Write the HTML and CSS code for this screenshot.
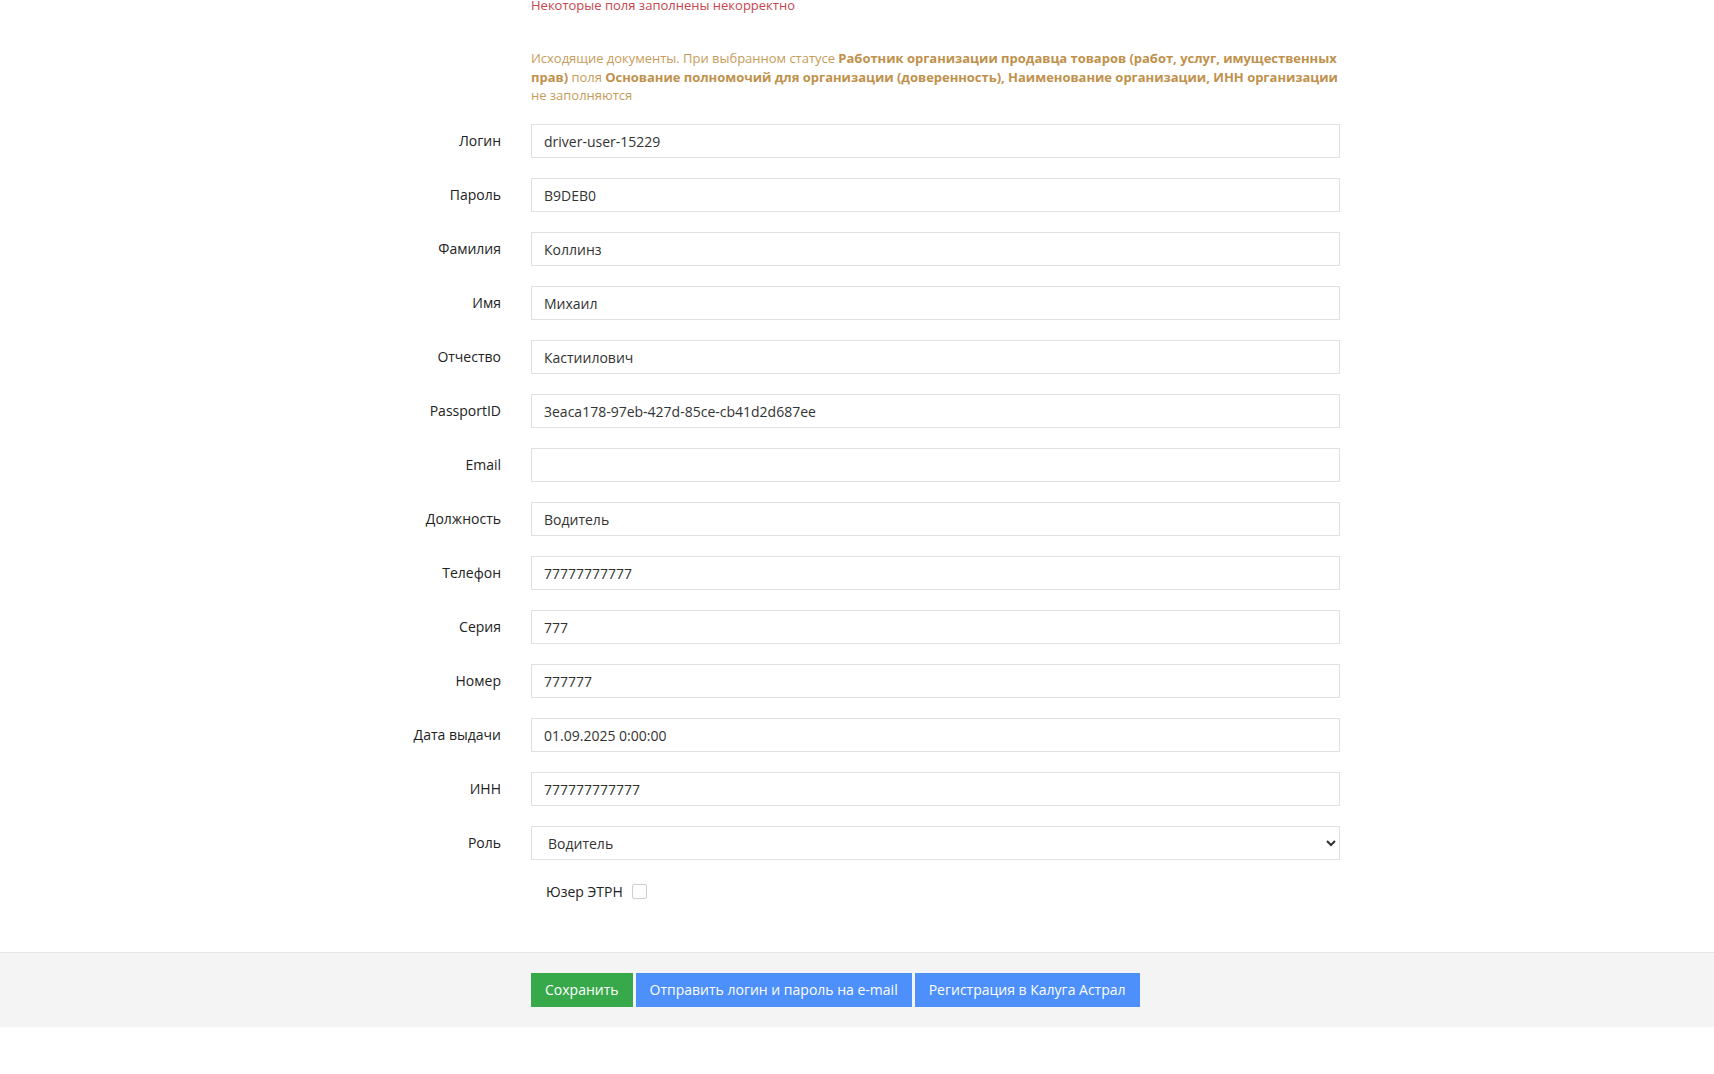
FILE: index.html
```html
<!DOCTYPE html>
<html lang="ru">
<head>
  <meta charset="UTF-8">
  <title>Пользователь</title>
  <link rel="stylesheet" href="styles.css">
</head>
<body>
  <div class="form-body">
    <div class="form-row">
      <div></div>
      <div class="msg-error">Некоторые поля заполнены некорректно</div>
    </div>

    <div class="form-row">
      <div></div>
      <div class="msg-info">
        Исходящие документы. При выбранном статусе <strong>Работник организации продавца товаров (работ, услуг, имущественных<br>прав)</strong> поля <strong>Основание полномочий для организации (доверенность), Наименование организации, ИНН организации</strong> не заполняются
      </div>
    </div>

    <div class="fields">
      <label for="login">Логин</label>
      <input type="text" id="login" value="driver-user-15229">

      <label for="password">Пароль</label>
      <input type="text" id="password" value="B9DEB0">

      <label for="lastName">Фамилия</label>
      <input type="text" id="lastName" value="Коллинз">

      <label for="firstName">Имя</label>
      <input type="text" id="firstName" value="Михаил">

      <label for="middleName">Отчество</label>
      <input type="text" id="middleName" value="Кастиилович">

      <label for="passportId">PassportID</label>
      <input type="text" id="passportId" value="3eaca178-97eb-427d-85ce-cb41d2d687ee">

      <label for="email">Email</label>
      <input type="text" id="email" value="">

      <label for="position">Должность</label>
      <input type="text" id="position" value="Водитель">

      <label for="phone">Телефон</label>
      <input type="text" id="phone" value="77777777777">

      <label for="series">Серия</label>
      <input type="text" id="series" value="777">

      <label for="number">Номер</label>
      <input type="text" id="number" value="777777">

      <label for="issueDate">Дата выдачи</label>
      <input type="text" id="issueDate" value="01.09.2025 0:00:00">

      <label for="inn">ИНН</label>
      <input type="text" id="inn" value="777777777777">

      <label for="role">Роль</label>
      <select id="role">
        <option>Водитель</option>
        <option>Диспетчер</option>
        <option>Администратор</option>
      </select>
    </div>

    <div class="form-row check-row">
      <div></div>
      <label class="check"><span>Юзер ЭТРН</span><input type="checkbox" id="etrn"></label>
    </div>
  </div>

  <div class="form-footer">
    <div class="form-row">
      <div></div>
      <div class="buttons">
        <button class="btn btn-green">Сохранить</button>
        <button class="btn btn-blue">Отправить логин и пароль на e-mail</button>
        <button class="btn btn-blue">Регистрация в Калуга Астрал</button>
      </div>
    </div>
  </div>
</body>
</html>
```

FILE: styles.css
```css
body { margin: 0; font-family: "Open Sans", "Noto Sans", sans-serif; font-size: 14px; line-height: 20px; color: #222; background: #fff; }

.form-body { margin-top: -4px; padding-bottom: 50px; }
.form-row, .fields { display: grid; grid-template-columns: 501px 809px; column-gap: 30px; }
.fields { row-gap: 20px; align-items: center; margin-top: 19px; }

.msg-error { font-size: 13px; line-height: 19px; color: #c8464f; }
.msg-info { margin-top: 34px; font-size: 13px; line-height: 18.5px; letter-spacing: -0.02px; color: #c69c5a; }
.msg-info strong { color: #c0914c; font-weight: 700; }

.fields label { text-align: right; color: #222; }
.fields input, .fields select { box-sizing: border-box; height: 34px; width: 100%; margin: 0; border: 1px solid #e0e0e0; border-radius: 0; background: #fff; font-family: inherit; font-size: 14px; color: #333; }
.fields input { padding: 1px 12px 0; }
.fields select { padding: 1px 8px 0 12px; }
.fields input:focus, .fields select:focus { outline: none; border-color: #c9c9c9; }

.check-row { margin-top: 22px; }
.check { display: flex; align-items: center; gap: 9px; padding-left: 15px; }
.check input { appearance: none; margin: 0; width: 15px; height: 15px; border: 1px solid #cfcfcf; border-radius: 2px; background: #fff; }
.check input:checked { background: #4d8ffb; border-color: #4d8ffb; }

.form-footer { border-top: 1px solid #e6e6e6; background: #f4f4f4; padding: 20px 0; }
.buttons { display: flex; gap: 3px; }
.btn { font-family: inherit; font-size: 14px; line-height: 20px; padding: 6px 13px; border: 1px solid transparent; border-radius: 0; color: #fff; cursor: pointer; }
.btn-green { background: #37a94a; border-color: #37a94a; }
.btn-blue { background: #4d8ffb; border-color: #4d8ffb; }
```
